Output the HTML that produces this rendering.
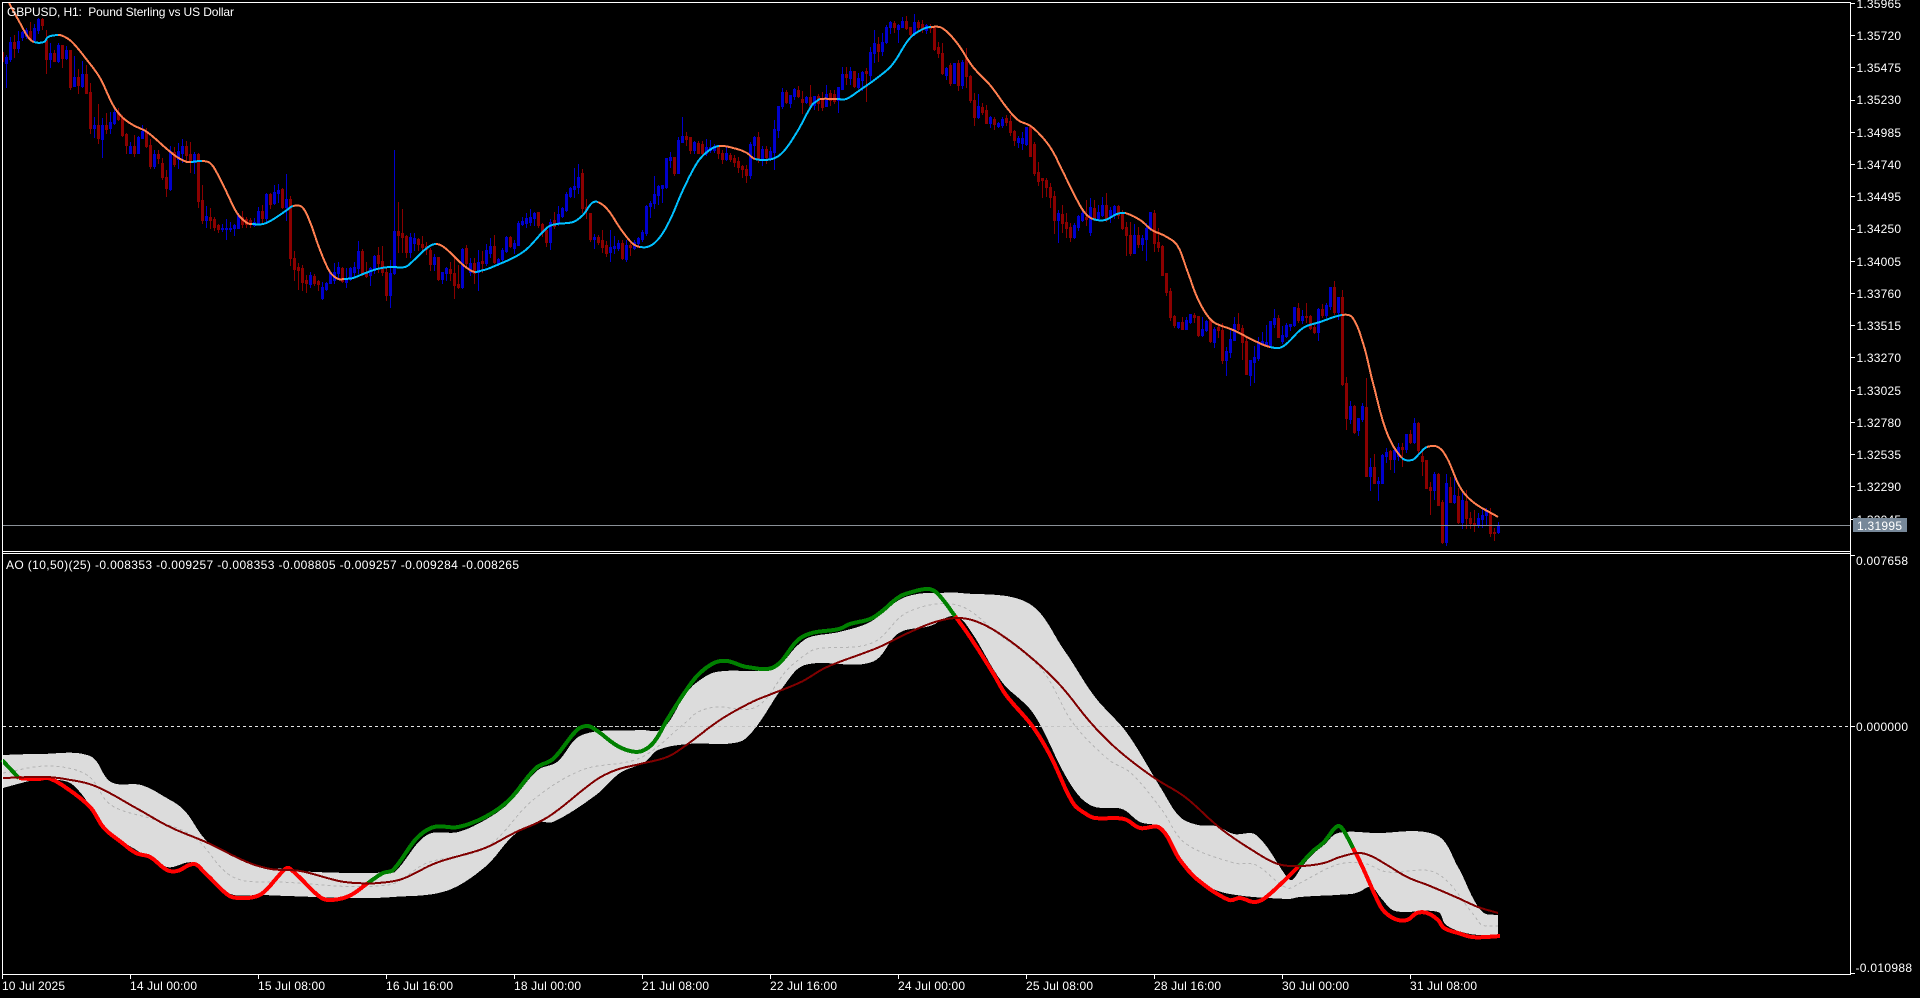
<!DOCTYPE html>
<html lang="en">
<head>
<meta charset="utf-8">
<title>GBPUSD, H1</title>
<style>
html,body{margin:0;padding:0;background:#000;width:1920px;height:998px;overflow:hidden}
svg{display:block;position:absolute;left:0;top:0}
text{font-family:"Liberation Sans",Arial,sans-serif;font-size:12px;fill:#fff;white-space:pre}
.c{shape-rendering:crispEdges;fill:none;stroke-linejoin:round}
</style>
</head>
<body>
<svg width="1920" height="998" viewBox="0 0 1920 998" xmlns="http://www.w3.org/2000/svg">
<rect width="1920" height="998" fill="#000"/>

<!-- candles -->
<g class="c">
<path id="rw" stroke="#8b0000" stroke-width="1" d="M3.5 52V62"/>
<path id="rb" stroke="#8b0000" stroke-width="3" d=""/>
<path id="bw" stroke="#0000cd" stroke-width="1" d=""/>
<path id="bb" stroke="#0000cd" stroke-width="3" d=""/>
</g>

<!-- moving average -->
<g class="c" stroke-width="2">
<polyline stroke="#ff7f50" points="9,3 20,23 28,37 34,42"/>
<polyline stroke="#00bfff" points="34,42 44,42 48,37 58,35"/>
<polyline stroke="#ff7f50" points="58,35 63,36 72,42 87,60 100,78 113,105 122,117 133,125 147,132 168,150 177,157 187,162 191,162"/>
<polyline stroke="#00bfff" points="191,162 202,161"/>
<polyline stroke="#ff7f50" points="202,161 210,163 217,173 227,193 237,213 247,223 252,224"/>
<polyline stroke="#00bfff" points="252,224 263,224 272,220 287,210 293,206"/>
<polyline stroke="#ff7f50" points="293,206 302,207 310,222 320,250 330,272 338,279 344,279"/>
<polyline stroke="#00bfff" points="344,279 353,278 363,274 377,269 390,267 405,267 413,261 427,248 436,244"/>
<polyline stroke="#ff7f50" points="436,244 445,248 462,264 470,270 475,272"/>
<polyline stroke="#00bfff" points="475,272 480,271 490,268 523,252 548,227 557,224 573,222 583,215 592,203 598,202"/>
<polyline stroke="#ff7f50" points="598,202 608,210 620,228 632,243 640,247"/>
<polyline stroke="#00bfff" points="640,247 650,246 660,237 670,220 683,190 697,163 707,152 719,146"/>
<polyline stroke="#ff7f50" points="719,146 737,149 747,153 755,159"/>
<polyline stroke="#00bfff" points="755,159 772,159 783,152 797,132 812,105 817,101 820,99"/>
<polyline stroke="#ff7f50" points="820,99 837,99"/>
<polyline stroke="#00bfff" points="837,99 846,99 860,90 877,78 892,65 910,38 923,29 931,27"/>
<polyline stroke="#ff7f50" points="931,27 942,28 957,43 973,67 990,85 1007,108 1018,120 1032,127 1050,147 1063,172 1077,200 1085,213 1093,219"/>
<polyline stroke="#00bfff" points="1093,219 1105,220 1117,214 1125,213"/>
<polyline stroke="#ff7f50" points="1125,213 1140,220 1152,230 1165,236 1177,245 1187,270 1197,297 1207,315 1215,323 1233,330 1257,342 1270,347"/>
<polyline stroke="#00bfff" points="1270,347 1282,347 1303,328 1320,322 1342,315"/>
<polyline stroke="#ff7f50" points="1342,315 1352,317 1363,343 1373,383 1387,433 1402,458"/>
<polyline stroke="#00bfff" points="1402,458 1412,460 1420,453 1427,447"/>
<polyline stroke="#ff7f50" points="1427,447 1438,447 1447,458 1460,487 1473,502 1498,517"/>
</g>

<!-- current price line -->
<path class="c" stroke="#8a9097" stroke-width="1" d="M3 525.5H1850"/>

<!-- indicator zero line -->
<path class="c" stroke="#e6e6e6" stroke-width="1" stroke-dasharray="3 3" d="M3 726.5H1850"/>

<!-- indicator band -->
<polygon id="band" fill="#dcdcdc" shape-rendering="crispEdges" points="3,755 39,754 90,756 111,782 141,785 165,797 184,810 208,842 242,860 262,867 284,869 315,872 373,873 388,872 395,872 427,835 458,832 485,820 509,803 538,770 557,762 582,735 640,730 662,729 685,695 696,683 716,672 774,668 798,645 810,637 839,632 870,622 899,600 917,594 937,593 961,593 1028,603 1064,650 1095,697 1127,733 1162,790 1180,817 1198,825 1216,826 1234,834 1256,835 1287,877 1292,880 1301,868 1312,855 1324,845 1338,833 1375,833 1436,835 1458,867 1474,900 1484,913 1498,915 1498,935 1470,934 1446,925 1438,912 1395,911 1381,898 1371,887 1359,892 1351,894 1300,897 1287,899 1225,893 1198,880 1180,862 1162,828 1140,822 1122,809 1095,807 1080,797 1064,773 1033,713 1002,682 970,630 955,616 930,626 899,633 872,662 805,665 783,687 756,727 739,742 688,744 658,750 645,762 620,773 596,795 553,822 538,822 514,835 485,867 446,891 393,897 354,898 262,895 228,893 194,863 167,867 133,848 109,832 73,785 48,779 34,780 3,788"/>

<!-- zero line over band -->
<path class="c" stroke="#c4c4c4" stroke-width="1" stroke-dasharray="3 3" d="M550 726.5H776M1033 726.5H1120"/>

<!-- mid dotted -->
<polyline class="c" stroke="#b4b4b4" stroke-width="1" stroke-dasharray="3 3" points="3,773 48,766 87,775 111,805 155,820 194,837 233,877 281,882 388,885 427,863 485,848 533,800 582,770 640,758 685,723 698,712 716,707 756,707 787,670 805,655 816,649 872,643 908,612 957,605 997,633 1042,670 1073,723 1109,760 1131,773 1162,810 1185,843 1234,863 1256,865 1287,888 1300,883 1336,865 1363,863 1387,872 1436,873 1474,915 1482,925 1498,926"/>

<!-- AO thick line -->
<g class="c" stroke-width="4">
<polyline stroke="#008000" points="2,760 17,776 19,778"/>
<polyline stroke="#ff0000" points="19,778 39,779 48,778 65,787 90,807 104,828 121,842 136,853 150,857 167,870 177,871 194,864 204,872 228,895 238,898 254,897 264,892 284,870 289,868 320,897 330,900 349,896 368,883"/>
<polyline stroke="#008000" points="368,883 383,873 393,870 417,838 434,827 458,827 485,817 509,800 536,768 553,759 577,730 587,726 596,730 616,745 630,751 642,751 654,742 667,720 685,692 698,675 714,663 727,661 747,667 774,667 798,640 812,633 839,629 850,624 870,619 881,612 899,597 912,592 928,589 937,593 955,616"/>
<polyline stroke="#ff0000" points="955,616 970,637 993,673 1006,695 1033,727 1051,757 1073,803 1086,814 1095,818 1124,819 1140,828 1160,828 1180,860 1198,880 1229,900 1240,898 1254,902 1265,898 1298,867"/>
<polyline stroke="#008000" points="1298,867 1312,852 1324,842 1336,827 1341,827 1353,848"/>
<polyline stroke="#ff0000" points="1353,848 1363,868 1375,895 1383,910 1395,919 1407,920 1417,913 1427,913 1438,920 1444,928 1458,933 1472,937 1486,937 1500,936"/>
</g>

<!-- AO signal -->
<polyline class="c" stroke="#800000" stroke-width="2" points="2,778 44,777 65,779 95,786 136,808 170,827 208,843 247,862 271,869 300,871 339,881 356,883 378,883 402,879 436,863 485,848 514,833 548,817 596,780 616,770 640,764 667,757 685,746 720,720 752,702 774,693 801,682 827,667 877,648 908,633 935,622 957,618 975,621 997,632 1028,655 1060,685 1091,723 1118,750 1153,777 1185,797 1220,828 1252,850 1278,864 1301,866 1324,863 1340,857 1359,853 1371,856 1387,865 1407,877 1430,886 1458,898 1478,907 1498,913"/>

<!-- frame -->
<path class="c" stroke="#fff" stroke-width="1" d="M2 2.5H1851M2.5 2V975M1850.5 2V975M2 551.5H1851M2 553.5H1851M2 974.5H1851"/>
<!-- ticks -->
<path class="c" stroke="#fff" stroke-width="1" d="M1851 3.5h4M1851 35.5h4M1851 67.5h4M1851 100.5h4M1851 132.5h4M1851 164.5h4M1851 196.5h4M1851 229.5h4M1851 261.5h4M1851 293.5h4M1851 325.5h4M1851 357.5h4M1851 390.5h4M1851 422.5h4M1851 454.5h4M1851 486.5h4M1851 519.5h4M1851 555.5h4M1851 726.5h4M1851 973.5h4M2.5 975v4M130.5 975v4M258.5 975v4M386.5 975v4M514.5 975v4M642.5 975v4M770.5 975v4M898.5 975v4M1026.5 975v4M1154.5 975v4M1282.5 975v4M1410.5 975v4"/>

<!-- titles -->
<text x="7" y="16" textLength="227" xml:space="preserve">GBPUSD, H1:  Pound Sterling vs US Dollar</text>
<text x="6" y="569" textLength="513" xml:space="preserve">AO (10,50)(25) -0.008353 -0.009257 -0.008353 -0.008805 -0.009257 -0.009284 -0.008265</text>

<!-- price axis -->
<g>
<text x="1856.5" y="8" textLength="44.5">1.35965</text>
<text x="1856.5" y="40" textLength="44.5">1.35720</text>
<text x="1856.5" y="72" textLength="44.5">1.35475</text>
<text x="1856.5" y="104" textLength="44.5">1.35230</text>
<text x="1856.5" y="137" textLength="44.5">1.34985</text>
<text x="1856.5" y="169" textLength="44.5">1.34740</text>
<text x="1856.5" y="201" textLength="44.5">1.34495</text>
<text x="1856.5" y="233" textLength="44.5">1.34250</text>
<text x="1856.5" y="266" textLength="44.5">1.34005</text>
<text x="1856.5" y="298" textLength="44.5">1.33760</text>
<text x="1856.5" y="330" textLength="44.5">1.33515</text>
<text x="1856.5" y="362" textLength="44.5">1.33270</text>
<text x="1856.5" y="395" textLength="44.5">1.33025</text>
<text x="1856.5" y="427" textLength="44.5">1.32780</text>
<text x="1856.5" y="459" textLength="44.5">1.32535</text>
<text x="1856.5" y="491" textLength="44.5">1.32290</text>
<text x="1856.5" y="524" textLength="44.5">1.32045</text>
<rect x="1853" y="518" width="54" height="14" fill="#778899" shape-rendering="crispEdges"/>
<text x="1857" y="530" textLength="45">1.31995</text>
<text x="1856" y="565" textLength="52">0.007658</text>
<text x="1856" y="731" textLength="52">0.000000</text>
<text x="1855.5" y="972" textLength="56.5">-0.010988</text>
</g>

<!-- time axis -->
<g>
<text x="2" y="990" textLength="63">10 Jul 2025</text>
<text x="130" y="990" textLength="67">14 Jul 00:00</text>
<text x="258" y="990" textLength="67">15 Jul 08:00</text>
<text x="386" y="990" textLength="67">16 Jul 16:00</text>
<text x="514" y="990" textLength="67">18 Jul 00:00</text>
<text x="642" y="990" textLength="67">21 Jul 08:00</text>
<text x="770" y="990" textLength="67">22 Jul 16:00</text>
<text x="898" y="990" textLength="67">24 Jul 00:00</text>
<text x="1026" y="990" textLength="67">25 Jul 08:00</text>
<text x="1154" y="990" textLength="67">28 Jul 16:00</text>
<text x="1282" y="990" textLength="67">30 Jul 00:00</text>
<text x="1410" y="990" textLength="67">31 Jul 08:00</text>
</g>
</svg>
<script>
var D="b55 57 63 87,b37 42 59 61,r35 42 48 57,b31 41 48 52,b31 32 37 40,b28 30 36 38,r22 31 38 39,b24 28 40 42,b18 19 30 33,r18 19 25 29,r30 40 59 73,b43 53 59 67,r50 53 61 61,b43 45 61 62,r45 45 58 67,b46 50 58 59,r50 50 87 89,b56 77 86 86,r69 77 85 93,b61 74 86 87,r65 74 93 93,r83 92 128 133,b117 125 128 137,r104 125 138 143,b118 125 139 157,r113 125 129 133,b112 122 128 133,b108 112 123 124,r108 112 119 120,r115 118 135 136,r133 134 145 153,b142 146 153 153,r135 146 153 156,b136 137 153 153,b125 131 138 138,r128 131 146 147,r139 145 166 168,b150 154 166 168,r150 154 158 163,r158 163 177 179,r170 177 188 196,b146 151 189 190,r147 152 164 166,b143 151 159 168,b139 146 153 162,r141 146 155 160,r142 154 162 172,b152 154 162 173,r153 154 201 207,r185 200 220 223,b206 216 220 227,r208 217 220 228,r217 219 227 230,r224 225 229 232,b224 228 229 231,b219 228 229 239,b222 228 229 231,b224 225 228 235,b213 215 228 228,r211 217 224 227,r217 219 224 227,r218 220 224 227,b218 222 225 226,b207 211 223 224,r205 211 218 223,b193 194 218 222,r193 194 204 208,b185 192 203 204,b184 190 193 202,r188 189 207 208,b174 199 207 220,r196 199 258 265,r251 258 269 280,r263 267 270 289,r265 268 282 290,r275 280 283 292,b272 275 284 287,r274 276 283 285,r280 281 284 290,b282 287 298 299,b282 283 289 290,b272 272 283 283,b263 272 280 283,b262 267 273 278,r267 268 281 282,b268 278 282 287,b267 268 279 280,b262 267 272 277,b241 251 268 273,r249 251 273 275,r262 272 276 277,b267 268 275 285,b255 256 270 273,r247 255 263 272,r246 261 272 275,r267 272 295 300,b260 273 295 307,b150 231 273 274,r202 231 235 252,r209 233 237 252,r235 236 252 257,b233 237 252 257,b233 238 243 250,r238 239 244 250,r236 244 247 250,r242 246 249 254,r248 250 264 270,b254 257 264 270,r257 257 279 280,b272 272 279 283,b267 268 273 280,r262 269 273 280,r258 273 285 298,r265 284 287 288,b248 249 287 288,r245 248 263 268,b258 263 272 275,r258 263 273 283,b250 262 272 290,"
+"r251 261 263 272,b244 250 263 265,b238 246 253 257,r235 246 262 263,b258 259 263 265,b248 250 259 260,b236 237 251 252,r236 237 246 247,b240 243 248 253,b221 223 245 245,b217 221 224 225,b213 218 223 227,b209 217 222 225,b212 213 218 225,r212 212 225 227,r223 224 232 236,r228 230 242 246,b219 222 242 249,r212 220 226 228,b206 214 223 225,b207 208 216 217,b192 194 210 211,b187 188 196 197,b168 186 189 197,b164 177 187 193,r169 173 208 212,r199 207 210 218,r213 213 239 241,b234 237 239 248,r235 237 242 244,r230 240 247 252,r241 245 253 256,b230 247 252 261,b236 246 248 253,b240 243 248 250,r240 243 258 259,b240 245 259 261,r243 245 247 255,b240 242 248 249,b237 238 243 245,b230 232 239 241,b205 206 233 235,b201 203 206 217,b176 194 203 208,b185 186 195 204,b185 185 188 202,b158 158 187 188,b152 157 160 167,r157 157 173 175,b137 140 173 173,b117 136 142 142,r132 136 139 145,r137 137 150 153,b141 142 150 153,r141 143 153 153,r141 144 153 154,b139 147 153 155,b140 147 150 152,b144 146 150 152,r145 145 153 158,r150 153 159 163,b147 153 159 160,r153 155 159 161,r155 158 162 166,r157 161 167 172,r165 166 169 177,r165 169 175 182,b142 144 175 178,b136 137 145 158,r132 137 159 162,b146 149 159 165,r146 149 157 163,b147 151 158 160,b120 129 152 169,b106 106 130 137,"
+"b88 92 106 108,r90 92 102 103,b95 95 103 107,b88 89 96 99,r86 90 96 97,r91 99 102 113,b96 97 102 103,r85 97 105 105,b96 96 105 109,r94 96 103 110,r92 100 107 110,b85 94 106 106,r90 93 100 105,r90 94 101 103,b87 87 100 112,b67 74 89 89,r67 74 77 84,b67 71 78 84,r71 71 86 87,b73 78 87 88,b71 72 80 90,r68 71 73 101,b47 52 75 80,b30 43 53 62,r37 44 51 61,b33 42 51 55,b25 27 42 43,b21 22 27 33,r21 23 27 32,b24 25 29 42,b17 21 27 27,r16 21 28 29,r27 27 34 36,b14 22 33 35,r20 22 27 31,r20 24 29 32,b24 25 30 33,r24 27 28 32,r27 28 49 50,r42 47 53 57,r43 53 73 74,b67 68 75 79,r63 65 83 85,b63 63 83 83,r60 63 85 90,b60 62 85 88,r48 58 76 87,r75 76 100 102,r93 100 117 125,b94 106 117 118,r103 107 112 114,r105 110 123 123,b116 117 123 127,r117 119 124 129,b122 123 126 127,b117 119 125 127,r115 118 122 125,r115 121 132 135,r130 131 140 145,b136 138 142 147,b132 138 143 149,b127 127 144 145,r125 127 156 156,r142 144 173 175,r162 172 181 185,r178 178 180 197,r178 180 187 196,r183 187 197 207,r191 196 220 233,b210 213 220 242,r205 214 223 232,r213 222 228 237,r223 227 237 241,b223 225 237 238,b215 216 227 230,b210 213 220 221,r200 217 219 225,b198 207 232 235,r200 208 219 220,b205 212 218 220,b197 205 215 216,r193 205 218 221,b207 210 217 222,b205 206 215 218,r205 206 215 218,r210 214 228 229,r222 227 235 255,r222 235 253 255,b224 235 253 253,r227 235 244 247,b235 238 244 250,b223 228 239 260,b212 212 229 230,r210 213 243 251,r228 242 247 251,r245 246 275 275,r273 273 292 295,r288 291 317 320,r315 316 325 327,b322 322 327 328,r317 322 329 329,b317 320 329 329,b314 314 322 323,r313 315 317 322,r316 316 335 336,b317 329 335 336,b320 321 330 331,r320 320 341 342,b327 329 342 347,r325 327 330 337,r323 330 360 363,b347 351 360 375,b330 339 352 357,b317 324 340 340,r313 324 329 330,r325 328 342 359,r337 341 374 374,b360 360 375 385,b346 357 362 382,b337 343 358 360,b332 341 344 345,b325 342 345 346,b321 321 345 346,b309 318 324 327,r315 318 337 337,b326 335 341 343,b323 325 336 337,b324 324 326 330,b307 307 325 326,r303 308 320 322,b310 316 320 323,r303 316 317 322,r315 316 328 329,r323 327 332 333,b308 309 332 340,r304 309 315 317,b303 305 315 317,b287 287 306 309,r281 287 312 314,b297 297 312 319,r290 297 384 385,"
+"r377 383 418 429,b401 406 419 423,r405 406 432 433,b418 418 430 435,b403 406 419 421,r378 407 476 476,b458 467 476 490,r454 467 483 483,b477 481 483 500,b454 455 483 483,b448 452 456 462,r450 451 459 469,b449 450 459 472,b443 447 456 460,r443 447 449 466,b434 434 449 452,r430 434 442 443,b418 423 442 443,r422 423 450 453,r450 456 461 475,r460 460 488 488,r482 487 490 514,b472 474 490 499,r473 474 505 505,r500 502 542 543,b474 483 542 545,r477 487 502 502,b477 495 502 503,r488 496 522 523,b493 500 522 528,r490 501 518 528,r512 518 523 528,r510 523 525 531,b513 518 525 527,b508 515 519 527,b508 510 515 525,r508 512 533 536,r528 532 533 540,b522 525 532 533";
var P={rw:"M3.5 52V62",rb:"",bw:"",bb:""};
D.split(",").forEach(function(s,k){
  var c=s[0],v=s.slice(1).split(" ").map(Number),x=6.5+4*k;
  P[c+"w"]+="M"+x+" "+v[0]+"V"+(v[3]+1);
  P[c+"b"]+="M"+x+" "+v[1]+"V"+(v[2]+1);
});
for(var i in P){document.getElementById(i).setAttribute("d",P[i]);}

/* smooth traced curves */
function parse(el){return el.getAttribute("points").trim().split(/\s+/).map(function(p){return p.split(",").map(Number);});}
function unit(a,b){var x=b[0]-a[0],y=b[1]-a[1],l=Math.sqrt(x*x+y*y)||1;return [x/l,y/l];}
function spline(pts,before,after){
  var out=[];
  var ext=[before||pts[0]].concat(pts,[after||pts[pts.length-1]]);
  for(var i=1;i<ext.length-2;i++){
    var a=ext[i],b=ext[i+1];
    var d=Math.sqrt(Math.pow(b[0]-a[0],2)+Math.pow(b[1]-a[1],2));
    var t1=unit(ext[i-1],b),t2=unit(a,ext[i+2]);
    var c1=[a[0]+t1[0]*d/3,a[1]+t1[1]*d/3],c2=[b[0]-t2[0]*d/3,b[1]-t2[1]*d/3];
    var n=Math.max(2,Math.ceil(d/2));
    for(var j=0;j<n;j++){
      var u=j/n,w=1-u;
      out.push((w*w*w*a[0]+3*w*w*u*c1[0]+3*w*u*u*c2[0]+u*u*u*b[0]).toFixed(1)+","+(w*w*w*a[1]+3*w*w*u*c1[1]+3*w*u*u*c2[1]+u*u*u*b[1]).toFixed(1));
    }
  }
  var e=pts[pts.length-1];out.push(e[0]+","+e[1]);
  return out.join(" ");
}
var L=[].slice.call(document.querySelectorAll("polyline")),O=L.map(parse);
L.forEach(function(el,i){
  var pts=O[i],prev=L[i-1]&&L[i-1].parentNode===el.parentNode&&el.parentNode.tagName==="g"?O[i-1]:null,
      next=L[i+1]&&L[i+1].parentNode===el.parentNode&&el.parentNode.tagName==="g"?O[i+1]:null;
  el.setAttribute("points",spline(pts,prev&&prev[prev.length-2],next&&next[1]));
});
var band=document.getElementById("band"),bp=parse(band);
/* top edge = first 66 points up to right end; bottom edge = remainder */
var split=bp.findIndex(function(p){return p[0]===1498&&p[1]===915;});
band.setAttribute("points",spline(bp.slice(0,split+1))+" "+spline(bp.slice(split+1)));
</script>
</body>
</html>
